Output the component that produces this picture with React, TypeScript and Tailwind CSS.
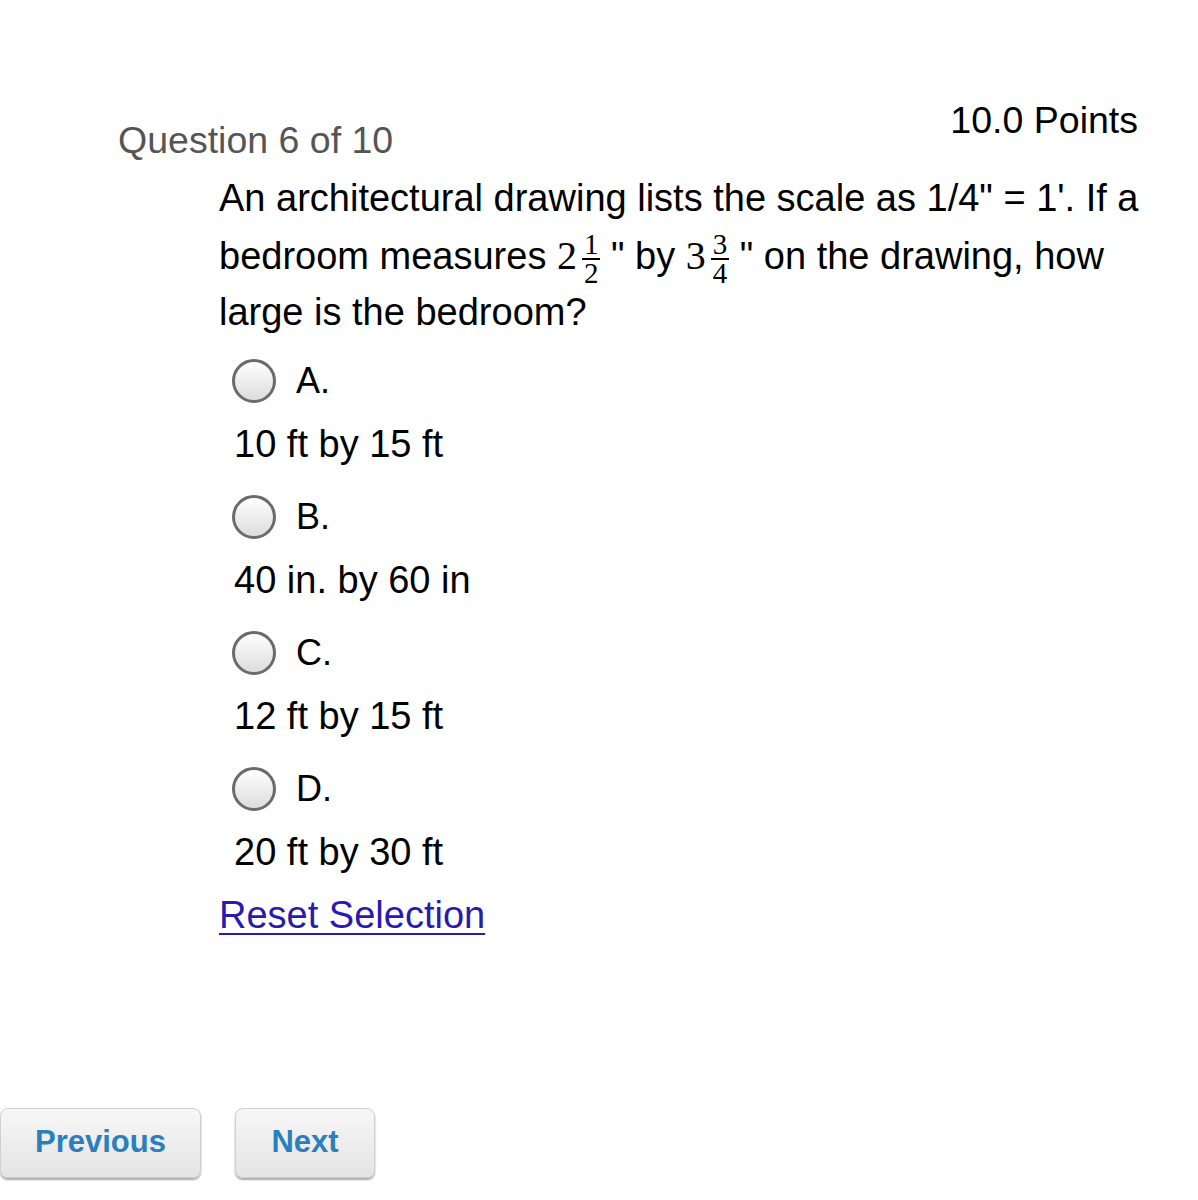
import React from "react";

const serif = { fontFamily: '"Liberation Serif", "DejaVu Serif", serif' };

const Frac = ({ n, d }: { n: string; d: string }) => (
  <span className="inline-flex flex-col items-center align-middle ml-[5px]" style={serif}>
    <span className="block text-[29px] leading-[27px] px-[2px]">{n}</span>
    <span className="block w-full h-[2px] bg-black" />
    <span className="block text-[29px] leading-[27px] px-[2px]">{d}</span>
  </span>
);

const Option = ({ letter, text }: { letter: string; text: string }) => (
  <div className="flex flex-col">
    <div className="flex items-center h-[48px] pl-[13px]">
      <div className="w-[44px] h-[44px] rounded-full border-[3px] border-[#6b6b6b] bg-gradient-to-b from-[#ffffff] to-[#dcdcdc]" />
      <span className="ml-[20px] text-[36px] text-black">{letter}</span>
    </div>
    <div className="pl-[15px] mt-[19px] text-[38px] leading-[40px] text-black">{text}</div>
  </div>
);

export default function App() {
  return (
    <div className="w-[1198px] h-[1200px] bg-white relative" style={{ fontFamily: '"Liberation Sans", Arial, sans-serif' }}>
      <div className="flex justify-between items-start pt-[100px] pl-[118px] pr-[60px]">
        <span className="mt-[20px] text-[37.5px] leading-[40px] text-[#555555]">Question 6 of 10</span>
        <span className="text-[37.5px] leading-[40px] text-black">10.0 Points</span>
      </div>
      <div className="pl-[219px] pr-[20px] mt-[10px] text-[38px] leading-[57px] text-black">
        <div>An architectural drawing lists the scale as 1/4" = 1'. If a</div>
        <div className="whitespace-nowrap h-[57px]">
          bedroom measures <span className="text-[40px]" style={serif}>2</span><Frac n="1" d="2" /> " by <span className="text-[40px]" style={serif}>3</span><Frac n="3" d="4" /> " on the drawing, how
        </div>
        <div>large is the bedroom?</div>
      </div>
      <div className="pl-[219px] mt-[16px] flex flex-col gap-[29px]">
        <Option letter="A." text="10 ft by 15 ft" />
        <Option letter="B." text="40 in. by 60 in" />
        <Option letter="C." text="12 ft by 15 ft" />
        <Option letter="D." text="20 ft by 30 ft" />
      </div>
      <div className="pl-[219px] mt-[23px]">
        <a href="#" className="text-[38px] leading-[40px] text-[#2a1ab0] underline decoration-[2px] underline-offset-[5px]">Reset Selection</a>
      </div>
      <div className="absolute left-0 top-[1108px] flex gap-[34px]">
        <button className="w-[201px] h-[70px] rounded-[8px] border border-[#d0d0d0] bg-gradient-to-b from-[#f7f7f7] to-[#e4e4e4] shadow-[0_2px_2px_rgba(0,0,0,0.35)] text-[31px] font-bold text-[#2b7fbd] pb-[2px]">Previous</button>
        <button className="w-[140px] h-[70px] rounded-[8px] border border-[#d0d0d0] bg-gradient-to-b from-[#f7f7f7] to-[#e4e4e4] shadow-[0_2px_2px_rgba(0,0,0,0.35)] text-[31px] font-bold text-[#2b7fbd] pb-[2px]">Next</button>
      </div>
    </div>
  );
}
